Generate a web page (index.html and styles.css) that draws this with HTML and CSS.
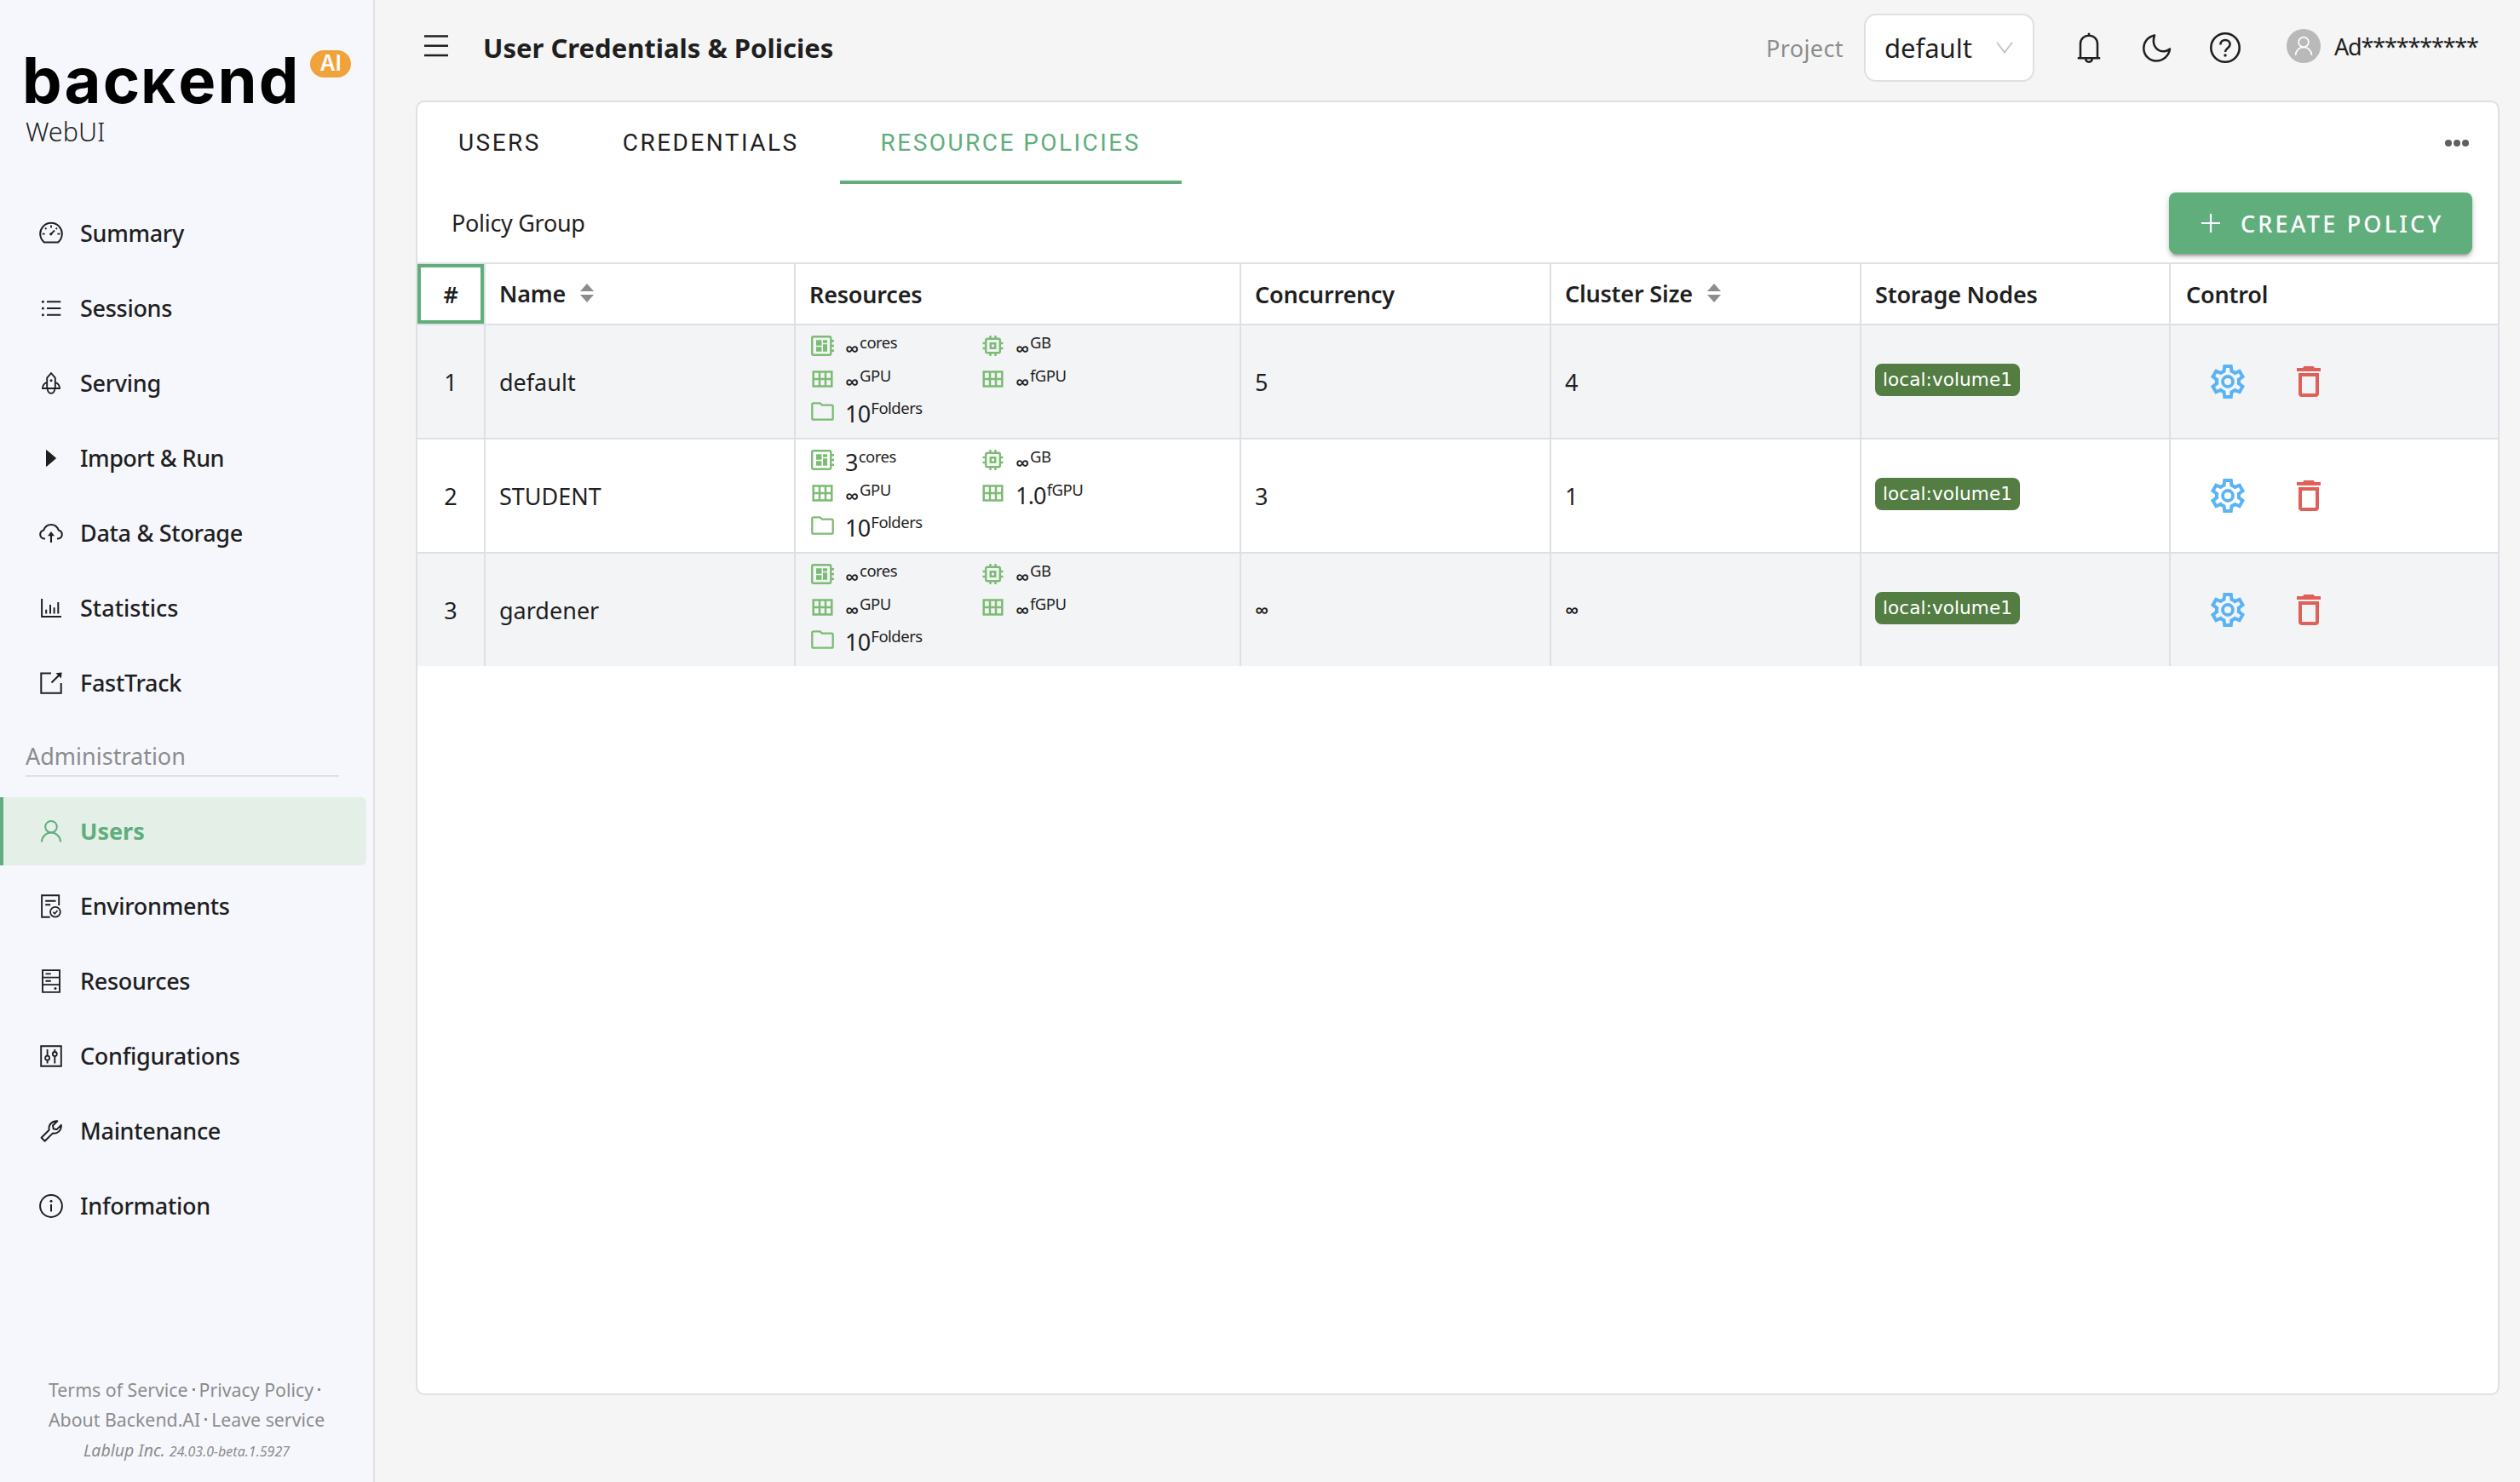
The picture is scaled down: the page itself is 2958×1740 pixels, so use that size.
FILE: index.html
```html
<!DOCTYPE html>
<html lang="en">
<head>
<meta charset="utf-8">
<title>User Credentials &amp; Policies</title>
<link rel="stylesheet" href="styles.css">
</head>
<body>
<svg class="sprite" aria-hidden="true">
  <symbol id="i-dashboard" viewBox="0 0 28 28"><path d="M6 24.6A12.8 12.8 0 1 1 22 24.6Z" fill="none" stroke="currentColor" stroke-width="2" stroke-linejoin="round"/><path d="M14 4.5v3M3.6 14.6h3M21.4 14.6h3M7 7.6l1.4 1.4M21 7.6l-1.4 1.4M13.5 15.1l4.6-4.6" stroke="currentColor" stroke-width="1.8"/><circle cx="13.8" cy="14.8" r="1.6" fill="currentColor"/></symbol>
  <symbol id="i-list" viewBox="0 0 28 28"><path d="M9 6.3h16.300M9 14h16.300M9 21.700h16.300" stroke="currentColor" stroke-width="2"/><circle cx="4.400" cy="6.300" r="1.500" fill="currentColor"/><circle cx="4.400" cy="14" r="1.500" fill="currentColor"/><circle cx="4.400" cy="21.700" r="1.500" fill="currentColor"/></symbol>
  <symbol id="i-rocket" viewBox="0 0 28 28"><path d="M9.200 20V7.500L14 2.200l4.800 5.300V20ZM9.200 12.800C5.500 14 4.100 16.500 4 20h20c-.1-3.500-1.500-6-5.200-7.200M9.700 20.500c.3 3 1.800 5.300 4.300 5.300s4-2.300 4.300-5.300" fill="none" stroke="currentColor" stroke-width="1.900"/><circle cx="14" cy="10.800" r="1.500" fill="currentColor"/></symbol>
  <symbol id="i-play" viewBox="0 0 28 28"><path d="M8.500 4.600 19.600 14 8.500 23.400Z" fill="currentColor" stroke="currentColor" stroke-linejoin="round"/></symbol>
  <symbol id="i-cloud" viewBox="0 0 28 28"><path d="M7 20.500C3.500 20.500 1.200 18.500 1.200 15.500c0-2.600 1.600-4.300 4-5C6.700 6.500 9.900 4 14 4s7.300 2.500 8.800 6.500c2.400.7 4 2.400 4 5 0 3-2.300 5-5.800 5M14 25V14.500" fill="none" stroke="currentColor" stroke-width="2.100"/><path d="M14 12 18 17.200H10Z" fill="currentColor"/></symbol>
  <symbol id="i-chart" viewBox="0 0 28 28"><path d="M3.100 3v20.900H26M8.200 20.500v-4.700M13 20.500V10M17.600 20.500v-7.200M22.300 20.500V7" fill="none" stroke="currentColor" stroke-width="2"/></symbol>
  <symbol id="i-export" viewBox="0 0 28 28"><path d="M14 2.400H2.300v23.300H25.700V14M14.500 13.500 24 4" fill="none" stroke="currentColor" stroke-width="2"/><path d="M19.500 2.200 26.600 1.400 25.800 8.500Z" fill="currentColor"/></symbol>
  <symbol id="i-user" viewBox="0 0 28 28"><path d="M2.900 26.500C3.200 20.300 8 15.600 14 15.600S24.800 20.300 25.100 26.500" fill="none" stroke="currentColor" stroke-width="2"/><circle cx="14" cy="8.700" r="6.800" fill="none" stroke="currentColor" stroke-width="2"/></symbol>
  <symbol id="i-env" viewBox="0 0 28 28"><path d="M23.200 13V1.300H3.100v25.400h9.600M7.200 7.700h12.300M7.200 12.200h6" fill="none" stroke="currentColor" stroke-width="1.900"/><circle cx="18.900" cy="20.800" r="5.900" fill="none" stroke="currentColor" stroke-width="1.800"/><path d="m16.300 20.800 2 2 3.200-3.800" fill="none" stroke="currentColor" stroke-width="1.600"/></symbol>
  <symbol id="i-db" viewBox="0 0 28 28"><path d="M4 1.100h20v25.800H4ZM4 9.600h20M4 18.100h20M7.500 5.400h6.300M7.500 13.800h6.300" fill="none" stroke="currentColor" stroke-width="1.900"/><circle cx="19" cy="22.500" r="1.500" fill="currentColor"/></symbol>
  <symbol id="i-control" viewBox="0 0 28 28"><path d="M2.200 2.200h23.600v23.600H2.200Z M9.600 6v8M9.600 19v3.500M18.300 6v2.500M18.300 13.500v9" fill="none" stroke="currentColor" stroke-width="1.900"/><circle cx="9.600" cy="16.200" r="2.500" fill="none" stroke="currentColor" stroke-width="1.800"/><circle cx="18.300" cy="11.500" r="2.500" fill="none" stroke="currentColor" stroke-width="1.800"/></symbol>
  <symbol id="i-tool" viewBox="0 0 28 28"><path d="m2.600 21.700 9-9c-1-6 3.500-11 9.700-10.500L16 7.500l.7 3.900 3.900.7 5.200-5.200c.6 6-4 10.700-10 9.700l-9.200 9.200Z" fill="none" stroke="currentColor" stroke-width="2" stroke-linejoin="round"/></symbol>
  <symbol id="i-info" viewBox="0 0 28 28"><circle cx="14" cy="14" r="12.900" fill="none" stroke="currentColor" stroke-width="2"/><path d="M14 12v8.500" stroke="currentColor" stroke-width="2"/><circle cx="14" cy="8.300" r="1.500" fill="currentColor"/></symbol>
  <symbol id="i-cores" viewBox="0 0 27 24"><path d="M3 1.200h18.500q1.800 0 1.800 1.800v18q0 1.800-1.800 1.800H3Q1.200 22.800 1.200 21V3Q1.200 1.200 3 1.200Z" fill="none" stroke="currentColor" stroke-width="2.400"/><path d="M6 5.300h6.500v6.500H6ZM14 5.300h5v3.400h-5ZM6 13.300h6.500v5.400H6ZM14 10.300h5v8.400h-5ZM24 5h3v2.500h-3ZM24 10.800h3v2.500h-3ZM24 16.500h3v2.500h-3Z" fill="currentColor"/></symbol>
  <symbol id="i-mem" viewBox="0 0 25 24"><rect x="4.200" y="3.700" width="16.600" height="16.600" rx="1.800" fill="none" stroke="currentColor" stroke-width="2.500"/><path d="M8.500 8h8v8h-8ZM11.100 10.600v2.800h2.800v-2.800Z" fill="currentColor" fill-rule="evenodd"/><path d="M9.500 0v3M15.500 0v3M9.500 21v3M15.500 21v3M.5 9h3M.5 15h3M21.500 9h3M21.500 15h3" stroke="currentColor" stroke-width="2.400"/></symbol>
  <symbol id="i-grid" viewBox="0 0 25 20"><path d="M1.700 1.500h21.600v17H1.700ZM1.700 10h21.600M9 1.500v17M16 1.500v17" fill="none" stroke="currentColor" stroke-width="2.500"/></symbol>
  <symbol id="i-folder" viewBox="0 0 27 22"><path d="M3 1.300h7.500l2.500 2.400h11q1.700 0 1.700 1.700v13.500q0 1.700-1.700 1.700H3q-1.700 0-1.700-1.700V3Q1.300 1.300 3 1.300Z" fill="none" stroke="currentColor" stroke-width="2.300"/></symbol>
  <symbol id="i-gear" viewBox="80 -880 800 800"><path fill="currentColor" fill-rule="evenodd" d="m370-80-16-128q-13-5-24.500-12T307-235l-119 50L78-375l103-78q-1-7-1-13.500v-27q0-6.500 1-13.500L78-585l110-190 119 50q11-8 23-15t24-12l16-128h220l16 128q13 5 24.500 12t22.500 15l119-50 110 190-103 78q1 7 1 13.500v27q0 6.500-2 13.500l103 78-110 190-118-50q-11 8-23 15t-24 12L590-80H370Zm70-80h79l14-106q31-8 57.500-23.500T639-327l99 41 39-68-86-65q5-14 7-29.500t2-31.500q0-16-2-31.500t-7-29.500l86-65-39-68-99 42q-22-23-48.500-38.500T533-694l-13-106h-79l-14 106q-31 8-57.500 23.500T321-633l-99-41-39 68 86 64q-5 15-7 30t-2 32q0 16 2 31t7 30l-86 65 39 68 99-42q22 23 48.500 38.500T427-266l13 106Z"/><circle cx="480" cy="-480" r="120" fill="none" stroke="currentColor" stroke-width="76"/></symbol>
  <symbol id="i-trash" viewBox="0 0 28 36"><path d="M0 2h7l1.500-2h11L21 2h7v4H0Z" fill="currentColor"/><path d="M4 8v24q0 2 2 2h16q2 0 2-2V10H4" fill="none" stroke="currentColor" stroke-width="4"/></symbol>
</svg>

<div class="app">
  <aside class="sidebar">
    <div class="logo"><span class="logo-word">bac<span class="logo-k">K</span>end</span><span class="logo-badge">AI</span></div>
    <div class="logo-sub">WebUI</div>
    <nav class="nav">
      <a class="nav-item"><svg class="nav-icon"><use href="#i-dashboard"/></svg><span>Summary</span></a>
      <a class="nav-item"><svg class="nav-icon"><use href="#i-list"/></svg><span>Sessions</span></a>
      <a class="nav-item"><svg class="nav-icon"><use href="#i-rocket"/></svg><span>Serving</span></a>
      <a class="nav-item"><svg class="nav-icon"><use href="#i-play"/></svg><span class="tight">Import &amp; Run</span></a>
      <a class="nav-item"><svg class="nav-icon"><use href="#i-cloud"/></svg><span>Data &amp; Storage</span></a>
      <a class="nav-item"><svg class="nav-icon"><use href="#i-chart"/></svg><span class="loose">Statistics</span></a>
      <a class="nav-item"><svg class="nav-icon"><use href="#i-export"/></svg><span>FastTrack</span></a>
    </nav>
    <div class="nav-group">Administration</div>
    <nav class="nav">
      <a class="nav-item selected"><svg class="nav-icon"><use href="#i-user"/></svg><span class="loose">Users</span></a>
      <a class="nav-item"><svg class="nav-icon"><use href="#i-env"/></svg><span>Environments</span></a>
      <a class="nav-item"><svg class="nav-icon"><use href="#i-db"/></svg><span>Resources</span></a>
      <a class="nav-item"><svg class="nav-icon"><use href="#i-control"/></svg><span>Configurations</span></a>
      <a class="nav-item"><svg class="nav-icon"><use href="#i-tool"/></svg><span>Maintenance</span></a>
      <a class="nav-item"><svg class="nav-icon"><use href="#i-info"/></svg><span>Information</span></a>
    </nav>
    <footer class="foot">
      <div class="foot-row"><span>Terms of Service</span><i class="dot"></i><span>Privacy Policy</span><i class="dot"></i></div>
      <div class="foot-row"><span>About Backend.AI</span><i class="dot"></i><span>Leave service</span></div>
      <div class="foot-meta"><span class="company">Lablup Inc.</span><span class="version">24.03.0-beta.1.5927</span></div>
    </footer>
  </aside>

  <main class="main">
    <header class="topbar">
      <svg class="menu-icon" viewBox="0 0 28 26"><path d="M0 1.500h28M0 12.800h28M0 24h28" stroke="currentColor" stroke-width="2.400"/></svg>
      <h1 class="title">User Credentials &amp; Policies</h1>
      <span class="project">Project</span>
      <div class="select"><span>default</span><svg class="chevron" viewBox="0 0 20 14"><path d="M1 .8 10 12.500 19 .8" fill="none" stroke="currentColor" stroke-width="1.700"/></svg></div>
      <svg class="bell" viewBox="0 0 28 36"><path d="M4 30V13.500C4 7.500 8.500 3.800 14 3.800s10 3.700 10 9.700V30M.8 30.200h26.400M14 3.800V.8M10.200 30.500c0 2.500 1.600 4.200 3.800 4.200s3.800-1.700 3.800-4.200" fill="none" stroke="currentColor" stroke-width="2.500"/></svg>
      <svg class="moon" viewBox="0 0 34 34"><path d="M14 2.500C5.500 4.500 1.300 11 1.300 17.500c0 8.500 6.500 15 14.700 15 7.800 0 14.700-5.500 16-14C23 26 9 18 14 2.500Z" fill="none" stroke="currentColor" stroke-width="2.500" stroke-linejoin="round"/></svg>
      <svg class="help" viewBox="0 0 36 36"><circle cx="18" cy="18" r="16.700" fill="none" stroke="currentColor" stroke-width="2.600"/><path d="M12.400 14.500c0-3.300 2.400-5.500 5.600-5.500s5.600 2.200 5.600 5.200c0 4.200-5.600 4.300-5.600 8.800" fill="none" stroke="currentColor" stroke-width="2.500"/><circle cx="18" cy="27" r="1.700" fill="currentColor"/></svg>
      <span class="avatar"><svg viewBox="0 0 28 28"><use href="#i-user"/></svg></span>
      <span class="account">Ad**********</span>
    </header>

    <section class="card">
      <div class="tabs">
        <div class="tab">USERS</div><div class="tab">CREDENTIALS</div><div class="tab active">RESOURCE POLICIES</div>
        <div class="more"><i></i><i></i><i></i></div>
      </div>
      <div class="toolbar">
        <span class="toolbar-title">Policy Group</span>
        <button class="create"><svg viewBox="0 0 22 22"><path d="M11 0v22M0 11h22" stroke="currentColor" stroke-width="2.200"/></svg><span>CREATE POLICY</span></button>
      </div>
      <div class="table">
        <div class="row head">
          <div class="cell idx focused"><span>#</span></div>
          <div class="cell sortable"><span>Name</span><i class="sorter"></i></div>
          <div class="cell"><span>Resources</span></div>
          <div class="cell"><span>Concurrency</span></div>
          <div class="cell sortable"><span>Cluster Size</span><i class="sorter"></i></div>
          <div class="cell"><span>Storage Nodes</span></div>
          <div class="cell last"><span>Control</span></div>
        </div>
        <div class="row shade">
          <div class="cell idx">1</div><div class="cell"><span>default</span></div>
          <div class="cell res">
            <div class="r"><svg class="g-cores"><use href="#i-cores"/></svg><b class="inf">∞</b><sup>cores</sup></div>
            <div class="r"><svg class="g-mem"><use href="#i-mem"/></svg><b class="inf">∞</b><sup>GB</sup></div>
            <div class="r"><svg class="g-grid"><use href="#i-grid"/></svg><b class="inf">∞</b><sup>GPU</sup></div>
            <div class="r"><svg class="g-grid"><use href="#i-grid"/></svg><b class="inf">∞</b><sup>fGPU</sup></div>
            <div class="r"><svg class="g-folder"><use href="#i-folder"/></svg><b>10</b><sup>Folders</sup></div>
          </div>
          <div class="cell">5</div><div class="cell">4</div>
          <div class="cell"><span class="chip">local:volume1</span></div>
          <div class="cell last ctl"><svg class="gear"><use href="#i-gear"/></svg><svg class="trash"><use href="#i-trash"/></svg></div>
        </div>
        <div class="row">
          <div class="cell idx">2</div><div class="cell"><span>STUDENT</span></div>
          <div class="cell res">
            <div class="r"><svg class="g-cores"><use href="#i-cores"/></svg><b>3</b><sup>cores</sup></div>
            <div class="r"><svg class="g-mem"><use href="#i-mem"/></svg><b class="inf">∞</b><sup>GB</sup></div>
            <div class="r"><svg class="g-grid"><use href="#i-grid"/></svg><b class="inf">∞</b><sup>GPU</sup></div>
            <div class="r"><svg class="g-grid"><use href="#i-grid"/></svg><b>1.0</b><sup>fGPU</sup></div>
            <div class="r"><svg class="g-folder"><use href="#i-folder"/></svg><b>10</b><sup>Folders</sup></div>
          </div>
          <div class="cell">3</div><div class="cell">1</div>
          <div class="cell"><span class="chip">local:volume1</span></div>
          <div class="cell last ctl"><svg class="gear"><use href="#i-gear"/></svg><svg class="trash"><use href="#i-trash"/></svg></div>
        </div>
        <div class="row shade">
          <div class="cell idx">3</div><div class="cell"><span>gardener</span></div>
          <div class="cell res">
            <div class="r"><svg class="g-cores"><use href="#i-cores"/></svg><b class="inf">∞</b><sup>cores</sup></div>
            <div class="r"><svg class="g-mem"><use href="#i-mem"/></svg><b class="inf">∞</b><sup>GB</sup></div>
            <div class="r"><svg class="g-grid"><use href="#i-grid"/></svg><b class="inf">∞</b><sup>GPU</sup></div>
            <div class="r"><svg class="g-grid"><use href="#i-grid"/></svg><b class="inf">∞</b><sup>fGPU</sup></div>
            <div class="r"><svg class="g-folder"><use href="#i-folder"/></svg><b>10</b><sup>Folders</sup></div>
          </div>
          <div class="cell"><b class="inf">∞</b></div><div class="cell"><b class="inf">∞</b></div>
          <div class="cell"><span class="chip">local:volume1</span></div>
          <div class="cell last ctl"><svg class="gear"><use href="#i-gear"/></svg><svg class="trash"><use href="#i-trash"/></svg></div>
        </div>
      </div>
    </section>
  </main>
</div>
</body>
</html>
```
FILE: styles.css
```css
* { box-sizing: border-box; }
body {
  margin: 0;
  font-family: "Noto Sans", "Open Sans", sans-serif;
  font-size: 27px;
  color: #1f1f1f;
  background: #f5f5f5;
}
.sprite { position: absolute; width: 0; height: 0; }
svg { display: block; flex: none; }
.app { display: flex; width: 2958px; height: 1740px; overflow: hidden; }

/* Sidebar */
.sidebar {
  width: 440px;
  flex: none;
  display: flex;
  flex-direction: column;
  background: #f6f7fd;
  border-right: 2px solid #dfe0e6;
}
.logo { display: flex; align-items: flex-start; padding: 59px 0 0 26px; height: 134px; }
.logo-word {
  width: 338px;
  font-family: Inter, sans-serif;
  font-weight: 700;
  font-size: 74px;
  line-height: 70px;
  letter-spacing: 2.200px;
  color: #000;
  white-space: nowrap;
}
.logo-k { font-size: 55px; font-weight: 800; }
.logo-badge {
  width: 48px;
  height: 32px;
  border-radius: 16px;
  background: #f0a33a;
  color: #fff;
  font-family: Inter, sans-serif;
  font-weight: 600;
  font-size: 25px;
  line-height: 30px;
  text-align: center;
}
.logo-sub { height: 100px; padding: 0 30px; font-size: 30.500px; font-weight: 300; line-height: 40px; }
.nav { display: flex; flex-direction: column; gap: 8px; }
.nav-item {
  display: flex;
  align-items: center;
  gap: 20px;
  width: 430px;
  height: 80px;
  padding-left: 46px;
  font-weight: 500;
  letter-spacing: -.3px;
  white-space: nowrap;
}
.nav-item span { padding-bottom: 2px; }
.nav-item .tight { letter-spacing: -.5px; }
.nav-item .loose { letter-spacing: 0; }
.nav-icon { width: 28px; height: 28px; }
.nav-item.selected {
  padding-left: 42px;
  border-left: 4px solid #5fae7c;
  border-radius: 0 6px 6px 0;
  background: #e4efe7;
  color: #5fae7c;
  font-weight: 700;
}
.nav-group {
  width: 368px;
  height: 70px;
  margin: 0 0 24px 30px;
  padding-top: 26px;
  border-bottom: 2px solid #dfe0e6;
  color: #8c8c8c;
  line-height: 40px;
}
.foot { margin-top: auto; height: 126px; color: #8c8c8c; font-size: 21.300px; }
.foot-row { display: flex; align-items: center; height: 35px; padding-left: 57px; white-space: nowrap; }
.dot { width: 3px; height: 3px; margin: 0 5px; background: #8c8c8c; }
.foot-meta { display: flex; align-items: baseline; gap: 5px; padding-left: 98px; height: 35px; line-height: 38px; font-style: italic; }
.company { font-size: 19.500px; }
.version { font-size: 16px; }

/* Header */
.main { flex: 1; min-width: 0; }
.topbar { display: flex; align-items: center; height: 118px; padding: 0 48px 6px 58px; white-space: nowrap; }
.menu-icon { width: 28px; height: 26px; margin-bottom: 4px; }
.title { margin: 0 auto 0 41px; font-size: 31px; font-weight: 700; line-height: 40px; }
.project { color: #8c8c8c; margin-right: 24px; letter-spacing: .4px; }
.select {
  display: flex;
  align-items: center;
  justify-content: space-between;
  width: 200px;
  height: 80px;
  padding: 0 23px 0 22px;
  border: 2px solid #dfe0e6;
  border-radius: 14px;
  background: #fff;
  font-size: 31px;
}
.chevron { width: 20px; height: 14px; color: #c0c0c0; }
.bell { width: 28px; height: 36px; margin-left: 50px; }
.moon { width: 34px; height: 34px; margin-left: 49px; }
.help { width: 36px; height: 36px; margin-left: 45px; }
.avatar {
  display: flex;
  align-items: center;
  justify-content: center;
  width: 40px;
  height: 40px;
  margin: 0 16px 4px 54px;
  border-radius: 50%;
  background: #b9b9b9;
  color: #fff;
}
.avatar svg { width: 24px; height: 24px; }
.account { width: 170px; margin-bottom: 4px; letter-spacing: -1.150px; }

/* Card */
.card {
  width: 2446px;
  height: 1520px;
  margin-left: 48px;
  border: 2px solid #dfe0e6;
  border-radius: 10px;
  background: #fff;
  overflow: hidden;
}
.tabs { display: flex; height: 96px; font-family: Roboto, sans-serif; font-size: 28px; letter-spacing: 2.450px; }
.tab { padding: 0 48px; line-height: 95px; white-space: nowrap; }
.tab.active { color: #5fae7c; border-bottom: 4px solid #5fae7c; }
.more { display: flex; align-items: center; gap: 2px; margin-left: auto; padding: 0 34px 0 0; }
.more i { width: 8px; height: 8px; border-radius: 50%; background: #5f5f5f; }
.toolbar { display: flex; justify-content: space-between; height: 92px; padding: 10px 30px 0 40px; }
.toolbar-title { line-height: 72px; letter-spacing: -.3px; }
.create {
  display: flex;
  align-items: center;
  gap: 24px;
  width: 356px;
  height: 72px;
  padding: 0 0 0 38px;
  border: 0;
  border-radius: 8px;
  background: #5fae7c;
  box-shadow: 0 6px 2px -4px rgba(0,0,0,.2), 0 4px 4px rgba(0,0,0,.14), 0 2px 10px rgba(0,0,0,.12);
  color: #fff;
  font: 500 27px "Noto Sans", sans-serif;
  letter-spacing: 3.200px;
  white-space: nowrap;
}
.create svg { width: 22px; height: 22px; }

/* Table */
.row {
  display: grid;
  grid-template-columns: 80px 364px 523px 364px 364px 363px 1fr;
  height: 134px;
  border-top: 2px solid #dfe0e6;
}
.row.head { height: 72px; font-weight: 600; letter-spacing: -.2px; }
.row.shade { background: #f3f4f6; }
.cell { display: flex; align-items: center; padding: 2px 0 2px 16px; border-right: 2px solid #dfe0e6; white-space: nowrap; }
.cell.last { border-right: 0; padding-left: 18px; }
.cell.idx { justify-content: center; padding-left: 0; }
.cell.focused { box-shadow: inset 0 0 0 4px #5fae7c; }
.cell.sortable { padding-bottom: 4px; }
.sorter { display: flex; flex-direction: column; gap: 4px; margin-left: 17px; }
.sorter::before, .sorter::after { content: ""; border: 8px solid transparent; }
.sorter::before { border-top: 0; border-bottom: 9px solid #8c8c8c; }
.sorter::after { border-bottom: 0; border-top: 9px solid #8c8c8c; }
.cell.res {
  display: grid;
  grid-template-columns: 200px 1fr;
  grid-template-rows: repeat(3, 38.500px);
  align-content: start;
  padding: 8px 0 0 17px;
}
.r { display: flex; align-items: flex-start; height: 38px; }
.r svg { color: #7cbb74; }
.r b { font-weight: 400; line-height: 38px; margin-left: 13px; letter-spacing: -.8px; }
.cell .inf { width: 16px; font-weight: 600; font-size: 23px; letter-spacing: 0; }
.r sup { margin: -1px 0 0 1px; font-size: 18.500px; line-height: 26px; letter-spacing: -.5px; }
.g-cores { width: 27px; height: 24px; margin: 4px 0 0 1px; }
.g-mem { width: 25px; height: 24px; margin: 4px 1px 0 2px; }
.g-grid { width: 25px; height: 20px; margin: 6px 1px 0 2px; }
.g-folder { width: 27px; height: 22px; margin: 5px 0 0 1px; }
.chip {
  width: 170px;
  height: 38px;
  margin-bottom: 5px;
  border-radius: 8px;
  background: #537d42;
  color: #fff;
  font-family: "DejaVu Sans", sans-serif;
  font-size: 21.500px;
  line-height: 37px;
  letter-spacing: .1px;
  text-align: center;
}
.cell.ctl { padding: 0 0 0 47px; }
.gear { width: 40px; height: 40px; color: #5ab4f3; }
.trash { width: 28px; height: 36px; margin-left: 61px; color: #df6058; }
```
